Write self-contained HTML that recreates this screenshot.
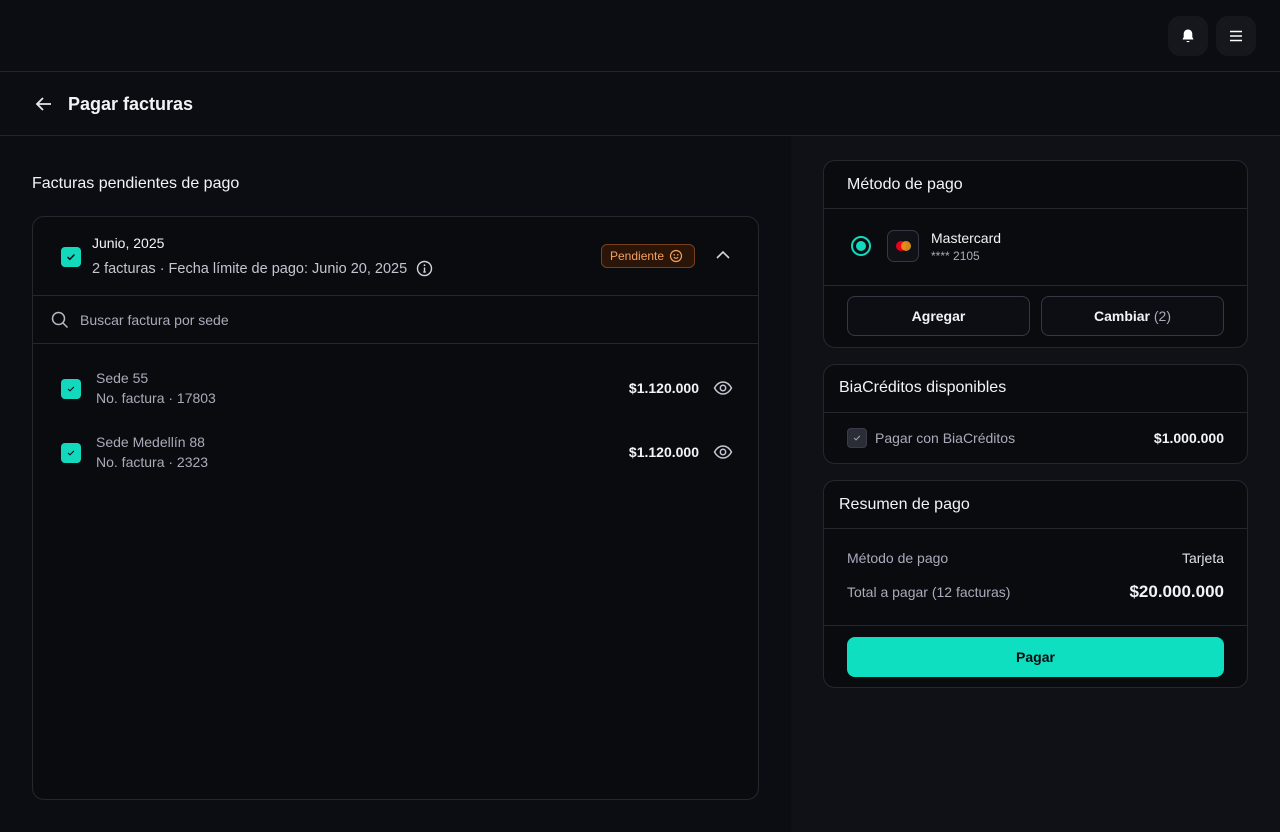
<!DOCTYPE html>
<html><head><meta charset="utf-8"><style>
*{box-sizing:border-box;margin:0;padding:0}
body{width:1280px;height:832px;background:#0c0d12;font-family:"Liberation Sans",sans-serif;color:#f2f3f7;position:relative;overflow:hidden;font-size:14px}
.abs{position:absolute}
.hl{position:absolute;left:0;width:1280px;height:1px;background:#23252d}
.ib{position:absolute;top:16px;width:40px;height:40px;border-radius:12px;background:#16171d;display:flex;align-items:center;justify-content:center}
.card{position:absolute;border:1px solid #25272f;border-radius:12px;background:#0a0b0f}
.sep{position:absolute;left:0;right:0;height:1px;background:#25272f}
.cb{position:absolute;width:20px;height:20px;border-radius:4px;background:#12d9bd;display:flex;align-items:center;justify-content:center}
.muted{color:#a9abbb}
.btn{position:absolute;top:135px;width:183px;height:40px;border:1px solid #353844;border-radius:8px;background:#0d0e13;display:flex;align-items:center;justify-content:center;font-weight:bold;font-size:14px}
</style></head><body>
<div class="ib" style="left:1168px"><svg width="16" height="16" viewBox="0 0 16 16"><path d="M8 1.5c-2.6 0-4.3 2-4.3 4.5v3L2.5 11.5h11L12.3 9V6C12.3 3.5 10.6 1.5 8 1.5z" fill="#fff"/><path d="M6.3 13a1.8 1.8 0 003.4 0z" fill="#fff"/></svg></div>
<div class="ib" style="left:1216px"><svg width="16" height="16" viewBox="0 0 16 16"><path d="M2 3.5h12M2 8h12M2 12.5h12" stroke="#fff" stroke-width="1.5"/></svg></div>
<div class="hl" style="top:71px"></div>
<svg class="abs" style="left:35px;top:96px" width="18" height="16" viewBox="0 0 18 16"><path d="M16 8H2M8 2L2 8l6 6" stroke="#e7e8ef" stroke-width="1.8" fill="none"/></svg>
<div class="abs" style="left:68px;top:94px;font-size:18px;font-weight:bold">Pagar facturas</div>
<div class="hl" style="top:135px"></div>
<div class="abs" style="left:791px;top:136px;width:489px;height:696px;background:#101116"></div>

<div class="abs" style="left:32px;top:175px;font-size:16px">Facturas pendientes de pago</div>
<div class="card" style="left:32px;top:216px;width:727px;height:584px">
  <div class="cb" style="left:28px;top:30px"><svg width="12" height="12" viewBox="0 0 12 12"><path d="M2.5 6l2.3 2.3L9.5 3.5" stroke="#0a0b0f" stroke-width="1.5" fill="none"/></svg></div>
  <div class="abs" style="left:59px;top:18px;font-size:14px">Junio, 2025</div>
  <div class="abs" style="left:59px;top:43px;font-size:14.5px;color:#c3c5d1;display:flex;align-items:center;white-space:nowrap">2 facturas · Fecha límite de pago: Junio 20, 2025<svg style="margin-left:9px" width="17" height="17" viewBox="0 0 17 17"><circle cx="8.5" cy="8.5" r="7" stroke="#d0d2dc" stroke-width="1.4" fill="none"/><path d="M8.5 7.5v4.5M7.3 12h2.4" stroke="#d0d2dc" stroke-width="1.4"/><circle cx="8.5" cy="5.2" r="0.9" fill="#d0d2dc"/></svg></div>
  <div class="abs" style="left:568px;top:27px;width:94px;height:24px;border:1px solid #7a3f1a;border-radius:6px;background:#2a1508;color:#f7a15f;font-size:12px;display:flex;align-items:center;padding-left:8px">Pendiente <svg style="margin-left:5px" width="14" height="14" viewBox="0 0 14 14"><circle cx="7" cy="7" r="5.5" stroke="#f7a15f" stroke-width="1.2" fill="none"/><circle cx="5.2" cy="5.8" r=".8" fill="#f7a15f"/><circle cx="8.8" cy="5.8" r=".8" fill="#f7a15f"/><path d="M4.8 8.3q2.2 2 4.4 0" stroke="#f7a15f" stroke-width="1.1" fill="none"/></svg></div>
  <svg class="abs" style="left:682px;top:32px" width="16" height="12" viewBox="0 0 16 12"><path d="M2 9l6-6 6 6" stroke="#d5d7e0" stroke-width="1.6" fill="none"/></svg>
  <div class="sep" style="top:78px"></div>
  <svg class="abs" style="left:18px;top:94px" width="18" height="18" viewBox="0 0 18 18"><circle cx="7.5" cy="7.5" r="6" stroke="#b5b7c5" stroke-width="1.5" fill="none"/><path d="M12 12l4.5 4.5" stroke="#b5b7c5" stroke-width="1.5"/></svg>
  <div class="abs muted" style="left:47px;top:95px">Buscar factura por sede</div>
  <div class="sep" style="top:126px"></div>
  <div class="cb" style="left:28px;top:162px"><svg width="10" height="10" viewBox="0 0 12 12"><path d="M2.5 6l2.3 2.3L9.5 3.5" stroke="#0a0b0f" stroke-width="1.3" fill="none"/></svg></div>
  <div class="abs muted" style="left:63px;top:153px">Sede 55</div>
  <div class="abs muted" style="left:63px;top:173px">No. factura · 17803</div>
  <div class="abs" style="right:59px;top:163px;font-weight:bold">$1.120.000</div>
  <svg class="abs" style="left:680px;top:162px" width="20" height="18" viewBox="0 0 20 18"><path d="M1.5 9C4 4.5 7 3 10 3s6 1.5 8.5 6c-2.5 4.5-5.5 6-8.5 6S4 13.5 1.5 9z" stroke="#c3c5d1" stroke-width="1.5" fill="none"/><circle cx="10" cy="9" r="2.7" stroke="#c3c5d1" stroke-width="1.5" fill="none"/></svg>
  <div class="cb" style="left:28px;top:226px"><svg width="10" height="10" viewBox="0 0 12 12"><path d="M2.5 6l2.3 2.3L9.5 3.5" stroke="#0a0b0f" stroke-width="1.3" fill="none"/></svg></div>
  <div class="abs muted" style="left:63px;top:217px">Sede Medellín 88</div>
  <div class="abs muted" style="left:63px;top:237px">No. factura · 2323</div>
  <div class="abs" style="right:59px;top:227px;font-weight:bold">$1.120.000</div>
  <svg class="abs" style="left:680px;top:226px" width="20" height="18" viewBox="0 0 20 18"><path d="M1.5 9C4 4.5 7 3 10 3s6 1.5 8.5 6c-2.5 4.5-5.5 6-8.5 6S4 13.5 1.5 9z" stroke="#c3c5d1" stroke-width="1.5" fill="none"/><circle cx="10" cy="9" r="2.7" stroke="#c3c5d1" stroke-width="1.5" fill="none"/></svg>
</div>

<div class="card" style="left:823px;top:160px;width:425px;height:188px">
  <div class="abs" style="left:23px;top:15px;font-size:16px">Método de pago</div>
  <div class="sep" style="top:47px"></div>
  <div class="abs" style="left:27px;top:75px;width:20px;height:20px;border-radius:50%;border:2px solid #12d9bd;display:flex;align-items:center;justify-content:center"><div style="width:10px;height:10px;border-radius:50%;background:#12d9bd"></div></div>
  <div class="abs" style="left:63px;top:69px;width:32px;height:32px;border:1px solid #353844;border-radius:7px;background:#111218"><div class="abs" style="left:8px;top:10px;width:10px;height:10px;border-radius:50%;background:#eb001b"></div><div class="abs" style="left:13px;top:10px;width:10px;height:10px;border-radius:50%;background:#f79e1b;opacity:.85"></div></div>
  <div class="abs" style="left:107px;top:69px;font-size:14px">Mastercard</div>
  <div class="abs muted" style="left:107px;top:88px;font-size:12px">**** 2105</div>
  <div class="sep" style="top:124px"></div>
  <div class="btn" style="left:23px">Agregar</div>
  <div class="btn" style="left:217px">Cambiar&nbsp;<span style="font-weight:normal;color:#a9abbb">(2)</span></div>
</div>

<div class="card" style="left:823px;top:364px;width:425px;height:100px">
  <div class="abs" style="left:15px;top:14px;font-size:16px">BiaCréditos disponibles</div>
  <div class="sep" style="top:47px"></div>
  <div class="abs" style="left:23px;top:63px;width:20px;height:20px;border-radius:4px;background:#2a2c36;border:1px solid #3a3d49;display:flex;align-items:center;justify-content:center"><svg width="10" height="10" viewBox="0 0 12 12"><path d="M2.5 6l2.3 2.3L9.5 3.5" stroke="#9da0b0" stroke-width="1.3" fill="none"/></svg></div>
  <div class="abs muted" style="left:51px;top:65px">Pagar con BiaCréditos</div>
  <div class="abs" style="right:23px;top:65px;font-weight:bold">$1.000.000</div>
</div>

<div class="card" style="left:823px;top:480px;width:425px;height:208px">
  <div class="abs" style="left:15px;top:15px;font-size:16px">Resumen de pago</div>
  <div class="sep" style="top:47px"></div>
  <div class="abs muted" style="left:23px;top:69px">Método de pago</div>
  <div class="abs" style="right:23px;top:69px;color:#dfe0e8">Tarjeta</div>
  <div class="abs muted" style="left:23px;top:103px">Total a pagar (12 facturas)</div>
  <div class="abs" style="right:23px;top:101px;font-weight:bold;font-size:17px">$20.000.000</div>
  <div class="sep" style="top:144px"></div>
  <div class="abs" style="left:23px;top:156px;width:377px;height:40px;border-radius:8px;background:#0fdfc1;display:flex;align-items:center;justify-content:center;font-weight:bold;color:#0a0b0f">Pagar</div>
</div>
</body></html>
